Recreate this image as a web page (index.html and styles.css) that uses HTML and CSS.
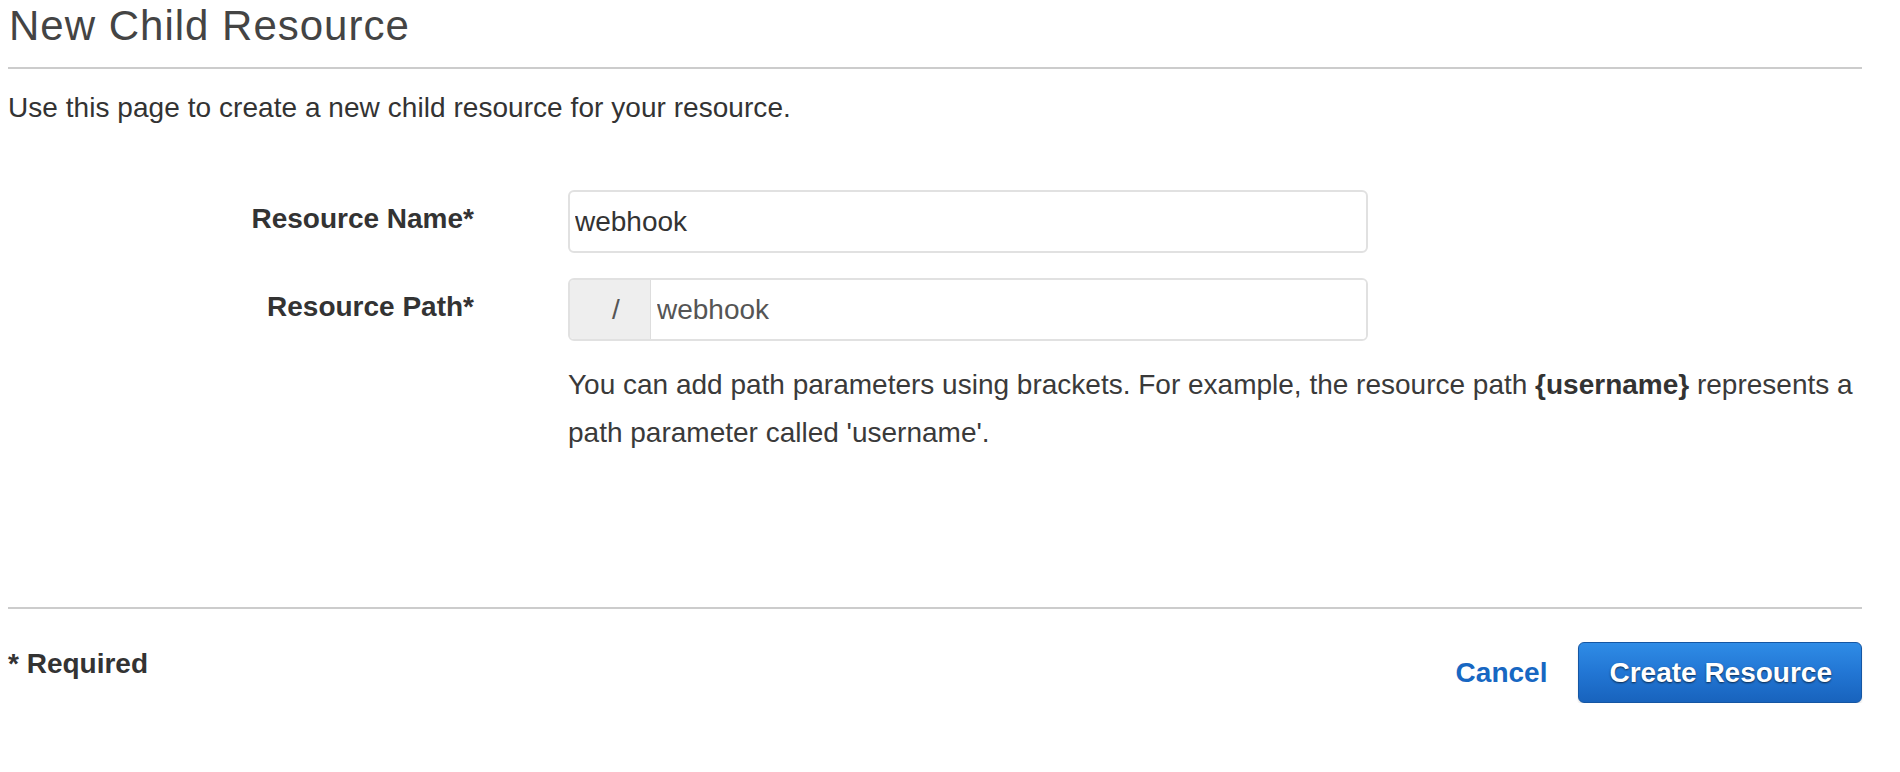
FILE: index.html
```html
<!DOCTYPE html>
<html lang="en">
<head>
<meta charset="utf-8">
<title>New Child Resource</title>
<link rel="stylesheet" href="styles.css">
</head>
<body>
<div class="page">
  <h1 class="title">New Child Resource</h1>
  <p class="intro">Use this page to create a new child resource for your resource.</p>

  <div class="form">
    <div class="row">
      <label class="label" for="res-name">Resource Name*</label>
      <div class="field">
        <input class="text-input" id="res-name" type="text" value="webhook">
      </div>
    </div>
    <div class="row">
      <label class="label" for="res-path">Resource Path*</label>
      <div class="field">
        <div class="input-group">
          <span class="prefix">/</span>
          <input class="group-input" id="res-path" type="text" value="webhook">
        </div>
        <p class="help">You can add path parameters using brackets. For example, the resource path <b>{username}</b> represents a path parameter called 'username'.</p>
      </div>
    </div>
  </div>

  <div class="actions">
    <div class="required">* Required</div>
    <div class="buttons">
      <a class="cancel" href="#">Cancel</a>
      <button class="primary" type="button">Create Resource</button>
    </div>
  </div>
</div>
</body>
</html>
```

FILE: styles.css
```css
html, body {
  margin: 0;
  padding: 0;
  background: #ffffff;
}

body {
  font-family: "Liberation Sans", Arial, Helvetica, sans-serif;
  color: #333333;
}

.page {
  padding: 2px 38px 0 8px;
}

.title {
  margin: 0;
  font-size: 42px;
  font-weight: normal;
  letter-spacing: 1px;
  line-height: 48px;
  color: #444444;
  padding: 0 0 17px 1px;
  border-bottom: 2px solid #cccccc;
}

.intro {
  margin: 22px 0 0 0;
  font-size: 28px;
  line-height: 34px;
  letter-spacing: 0.05px;
  color: #333333;
}

.form {
  margin-top: 65px;
  display: flex;
  flex-direction: column;
  gap: 25px;
}

.row {
  display: grid;
  grid-template-columns: 466px 1fr;
  column-gap: 94px;
  align-items: start;
}

.label {
  font-size: 28px;
  font-weight: bold;
  line-height: 34px;
  text-align: right;
  padding-top: 12px;
  color: #333333;
}

.text-input {
  box-sizing: border-box;
  width: 800px;
  height: 63px;
  margin: 0;
  border: 2px solid #e1e1e1;
  border-radius: 6px;
  padding: 0 5px;
  font-family: "Liberation Sans", Arial, Helvetica, sans-serif;
  font-size: 28px;
  color: #333333;
  background: #ffffff;
  outline: none;
}

.input-group {
  box-sizing: border-box;
  width: 800px;
  height: 63px;
  display: flex;
  border: 2px solid #e1e1e1;
  border-radius: 6px;
  overflow: hidden;
  box-shadow: inset 0 2px 2px rgba(0, 0, 0, 0.04);
}

.prefix {
  box-sizing: border-box;
  width: 81px;
  flex: none;
  padding-left: 42px;
  display: flex;
  align-items: center;
  background: #eeeeee;
  border-right: 1px solid #dddddd;
  font-size: 28px;
  color: #555555;
}

.group-input {
  flex: 1;
  min-width: 0;
  margin: 0;
  border: none;
  padding: 0 6px;
  font-family: "Liberation Sans", Arial, Helvetica, sans-serif;
  font-size: 28px;
  color: #555555;
  background: #ffffff;
  outline: none;
}

.help {
  margin: 20px 0 0 0;
  font-size: 28px;
  line-height: 48px;
  color: #3a3a3a;
}

.help b {
  color: #333333;
}

.actions {
  margin-top: 150px;
  border-top: 2px solid #cccccc;
  padding-top: 33px;
  display: flex;
  justify-content: space-between;
  align-items: flex-start;
}

.required {
  padding-top: 5px;
  font-size: 28px;
  font-weight: bold;
  line-height: 34px;
  color: #333333;
}

.buttons {
  display: flex;
  align-items: center;
  gap: 31px;
}

.cancel {
  font-size: 28px;
  font-weight: bold;
  color: #1767c2;
  text-decoration: none;
}

.primary {
  box-sizing: border-box;
  height: 61px;
  padding: 0 29px 0 30px;
  margin: 0;
  border: 1px solid #1556a3;
  border-radius: 6px;
  background: linear-gradient(to bottom, #2f8ce6 0%, #2276d4 50%, #1863bd 100%);
  box-shadow: 0 2px 2px rgba(0, 0, 0, 0.12);
  font-family: "Liberation Sans", Arial, Helvetica, sans-serif;
  font-size: 28px;
  font-weight: bold;
  color: #ffffff;
  text-shadow: 0 1px 2px rgba(0, 0, 0, 0.65);
  cursor: pointer;
}
```
